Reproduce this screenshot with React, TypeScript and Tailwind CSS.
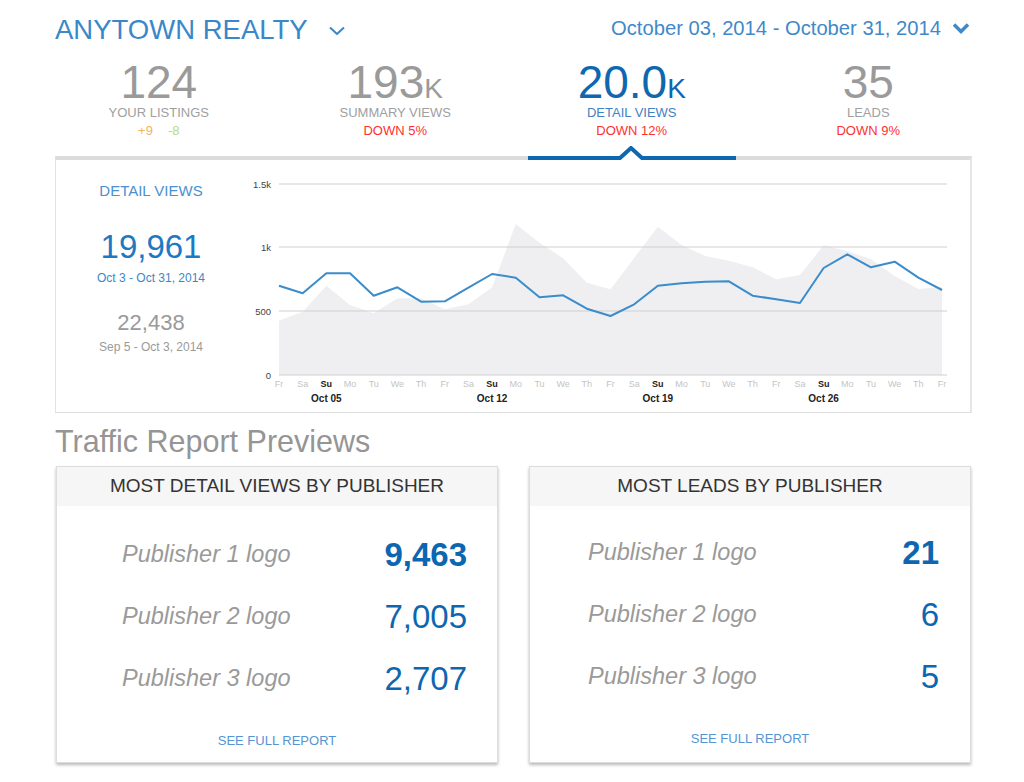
const STATS = [
  { value: "124", suffix: "", label: "YOUR LISTINGS", active: false, delta: null },
  { value: "193", suffix: "K", label: "SUMMARY VIEWS", active: false, delta: "DOWN 5%" },
  { value: "20.0", suffix: "K", label: "DETAIL VIEWS", active: true, delta: "DOWN 12%" },
  { value: "35", suffix: "", label: "LEADS", active: false, delta: "DOWN 9%" },
];

const DAYS = ["Fr", "Sa", "Su", "Mo", "Tu", "We", "Th"];
const WEEKS = ["Oct 05", "Oct 12", "Oct 19", "Oct 26"];

// page-y of the points, shifted to chart coords below
const CURRENT = [
  285.7, 293.3, 273.3, 273.3, 295.7, 287.3, 301.7, 301.3, 287.7, 274, 277.7, 297.3, 295.3, 308.7, 316,
  304.3, 285.7, 283.3, 281.7, 281.3, 295.7, 299.3, 303, 268, 254.3, 267.3, 261.7, 277.7, 290,
];
const PREVIOUS = [
  320.7, 311.7, 285.7, 305, 313.3, 298.3, 298.3, 309.3, 304.3, 287.3, 224, 242.7, 258.3, 282.7, 289.3,
  258, 226.7, 245, 256, 260.7, 267.3, 279.3, 275, 245.3, 251, 259.3, 276, 289, 286.7,
];

const GRID = [
  { y: 24, label: "1.5k" },
  { y: 87, label: "1k" },
  { y: 151, label: "500" },
  { y: 215, label: "0" },
];

const PUBLISHERS = [
  {
    title: "MOST DETAIL VIEWS BY PUBLISHER",
    rows: ["9,463", "7,005", "2,707"],
    pad: "pl-[65px] pr-[30px] pt-[18px]",
  },
  {
    title: "MOST LEADS BY PUBLISHER",
    rows: ["21", "6", "5"],
    pad: "pl-[58px] pr-[31px] pt-[16px]",
  },
];

const px = (i: number) => 33 + i * 23.68;

function Chart() {
  const line = CURRENT.map((v, i) => `${px(i)},${v - 160}`).join(" ");
  const area =
    `M${px(0)},215 ` + PREVIOUS.map((v, i) => `L${px(i)},${v - 160}`).join(" ") + ` L${px(28)},215 Z`;

  return (
    <svg width="720" height="250" viewBox="0 0 720 250" className="shrink-0">
      <path d={area} fill="#efeff1" />
      {GRID.map((g) => (
        <g key={g.label}>
          <line x1="33" x2="701" y1={g.y} y2={g.y} stroke="#cfcfcf" strokeWidth="1" />
          <text x="25" y={g.y + 3.5} textAnchor="end" fontSize="9.5" fill="#444">
            {g.label}
          </text>
        </g>
      ))}
      <polyline points={line} fill="none" stroke="#3a8ccb" strokeWidth="2" strokeLinejoin="round" />
      {CURRENT.map((_, i) => {
        const day = DAYS[i % 7];
        const sunday = day === "Su";
        return (
          <text
            key={i}
            x={px(i)}
            y="227.3"
            textAnchor="middle"
            fontSize="9"
            fontWeight={sunday ? 700 : 400}
            fill={sunday ? "#222" : "#c4c4c4"}
          >
            {day}
          </text>
        );
      })}
      {WEEKS.map((w, k) => (
        <text key={w} x={px(2 + k * 7)} y="241.6" textAnchor="middle" fontSize="10" fontWeight="700" fill="#222">
          {w}
        </text>
      ))}
    </svg>
  );
}

function TabIndicator() {
  return (
    <svg width="208" height="14" viewBox="0 0 208 14" className="absolute left-0 bottom-[-4px]">
      <rect x="88" y="9" width="30" height="5" fill="#fff" />
      <polyline
        points="0,12 92,12 103,2 114,12 208,12"
        fill="none"
        stroke="#0f67b0"
        strokeWidth="4"
        strokeLinejoin="miter"
      />
    </svg>
  );
}

export default function App() {
  return (
    <div className="min-h-[782px] bg-white font-['Liberation_Sans',Arial,sans-serif]">
      <div className="ml-[55px] w-[917px]">
        <header className="flex h-[62px] items-start justify-between">
          <div className="mt-[14px] flex items-center text-[27.5px] leading-[32px] text-[#3a87c9]">
            ANYTOWN REALTY
            <svg width="16" height="9" viewBox="0 0 16 9" className="ml-[21px] mt-[1px]">
              <polyline points="1,1.5 8,8 15,1.5" fill="none" stroke="#3a87c9" strokeWidth="2" />
            </svg>
          </div>
          <div className="mr-[2px] mt-[16px] flex items-center text-[20.2px] leading-[24px] text-[#3f89ca]">
            October 03, 2014 - October 31, 2014
            <svg width="18" height="12" viewBox="0 0 18 12" className="ml-[11px]">
              <polyline points="2,2.5 9,9.5 16,2.5" fill="none" stroke="#3f89ca" strokeWidth="3.5" />
            </svg>
          </div>
        </header>

        <div className="grid h-[94px] grid-cols-4 gap-x-[29px]">
          {STATS.map((s) => (
            <div key={s.label} className="relative flex flex-col items-center">
              <div
                className={`h-[40px] text-[46px] leading-[40px] ${s.active ? "text-[#0f67b0]" : "text-[#9a9a9a]"}`}
              >
                {s.value}
                {s.suffix && <span className="text-[28px] leading-none">{s.suffix}</span>}
              </div>
              <div
                className={`mt-[3px] text-[13px] leading-[16px] ${s.active ? "text-[#4282c3]" : "text-[#a0a0a0]"}`}
              >
                {s.label}
              </div>
              {s.delta ? (
                <div className="mt-[2px] text-[13px] leading-[16px] text-[#ff3030]">{s.delta}</div>
              ) : (
                <div className="mt-[2px] flex gap-[15px] text-[13px] leading-[16px]">
                  <span className="text-[#f6b35c]">+9</span>
                  <span className="text-[#b5d98c]">-8</span>
                </div>
              )}
              {s.active && <TabIndicator />}
            </div>
          ))}
        </div>

        <section className="flex h-[257px] border-t-4 border-r-2 border-b border-l border-t-[#dcdcdc] border-r-[#e6e6e6] border-b-[#dedede] border-l-[#e2e2e2]">
          <div className="flex w-[190px] shrink-0 flex-col items-center">
            <div className="mt-[22px] text-[15px] leading-[18px] text-[#4a90d2]">DETAIL VIEWS</div>
            <div className="mt-[28px] text-[33px] leading-[38px] text-[#1d79c3]">19,961</div>
            <div className="mt-[5px] text-[12px] leading-[14px] text-[#3d87c8]">Oct 3 - Oct 31, 2014</div>
            <div className="mt-[25px] text-[22px] leading-[26px] text-[#9a9a9a]">22,438</div>
            <div className="mt-[4px] text-[12px] leading-[14px] text-[#9a9a9a]">Sep 5 - Oct 3, 2014</div>
          </div>
          <Chart />
        </section>

        <h2 className="mt-[10px] text-[30.5px] leading-[36px] text-[#959595]">Traffic Report Previews</h2>

        <div className="mt-[7px] grid grid-cols-2 gap-x-[31px] px-[1px]">
          {PUBLISHERS.map((card) => (
            <div
              key={card.title}
              className="border border-[#dddddd] bg-white shadow-[0_2px_3px_rgba(0,0,0,0.28)]"
            >
              <div className="flex h-[39px] items-center justify-center bg-[#f6f6f6] text-[19px] text-[#333]">
                {card.title}
              </div>
              <div className={card.pad}>
                {card.rows.map((n, i) => (
                  <div key={i} className="flex h-[62px] items-center justify-between">
                    <span className="text-[23.5px] italic text-[#9a9a9a]">Publisher {i + 1} logo</span>
                    <span className={`text-[33px] text-[#0d66b0] ${i === 0 ? "font-bold" : ""}`}>{n}</span>
                  </div>
                ))}
              </div>
              <div className="mt-[23px] pb-[13px] text-center text-[13px] leading-[16px] text-[#5495d4]">
                SEE FULL REPORT
              </div>
            </div>
          ))}
        </div>
      </div>
    </div>
  );
}
